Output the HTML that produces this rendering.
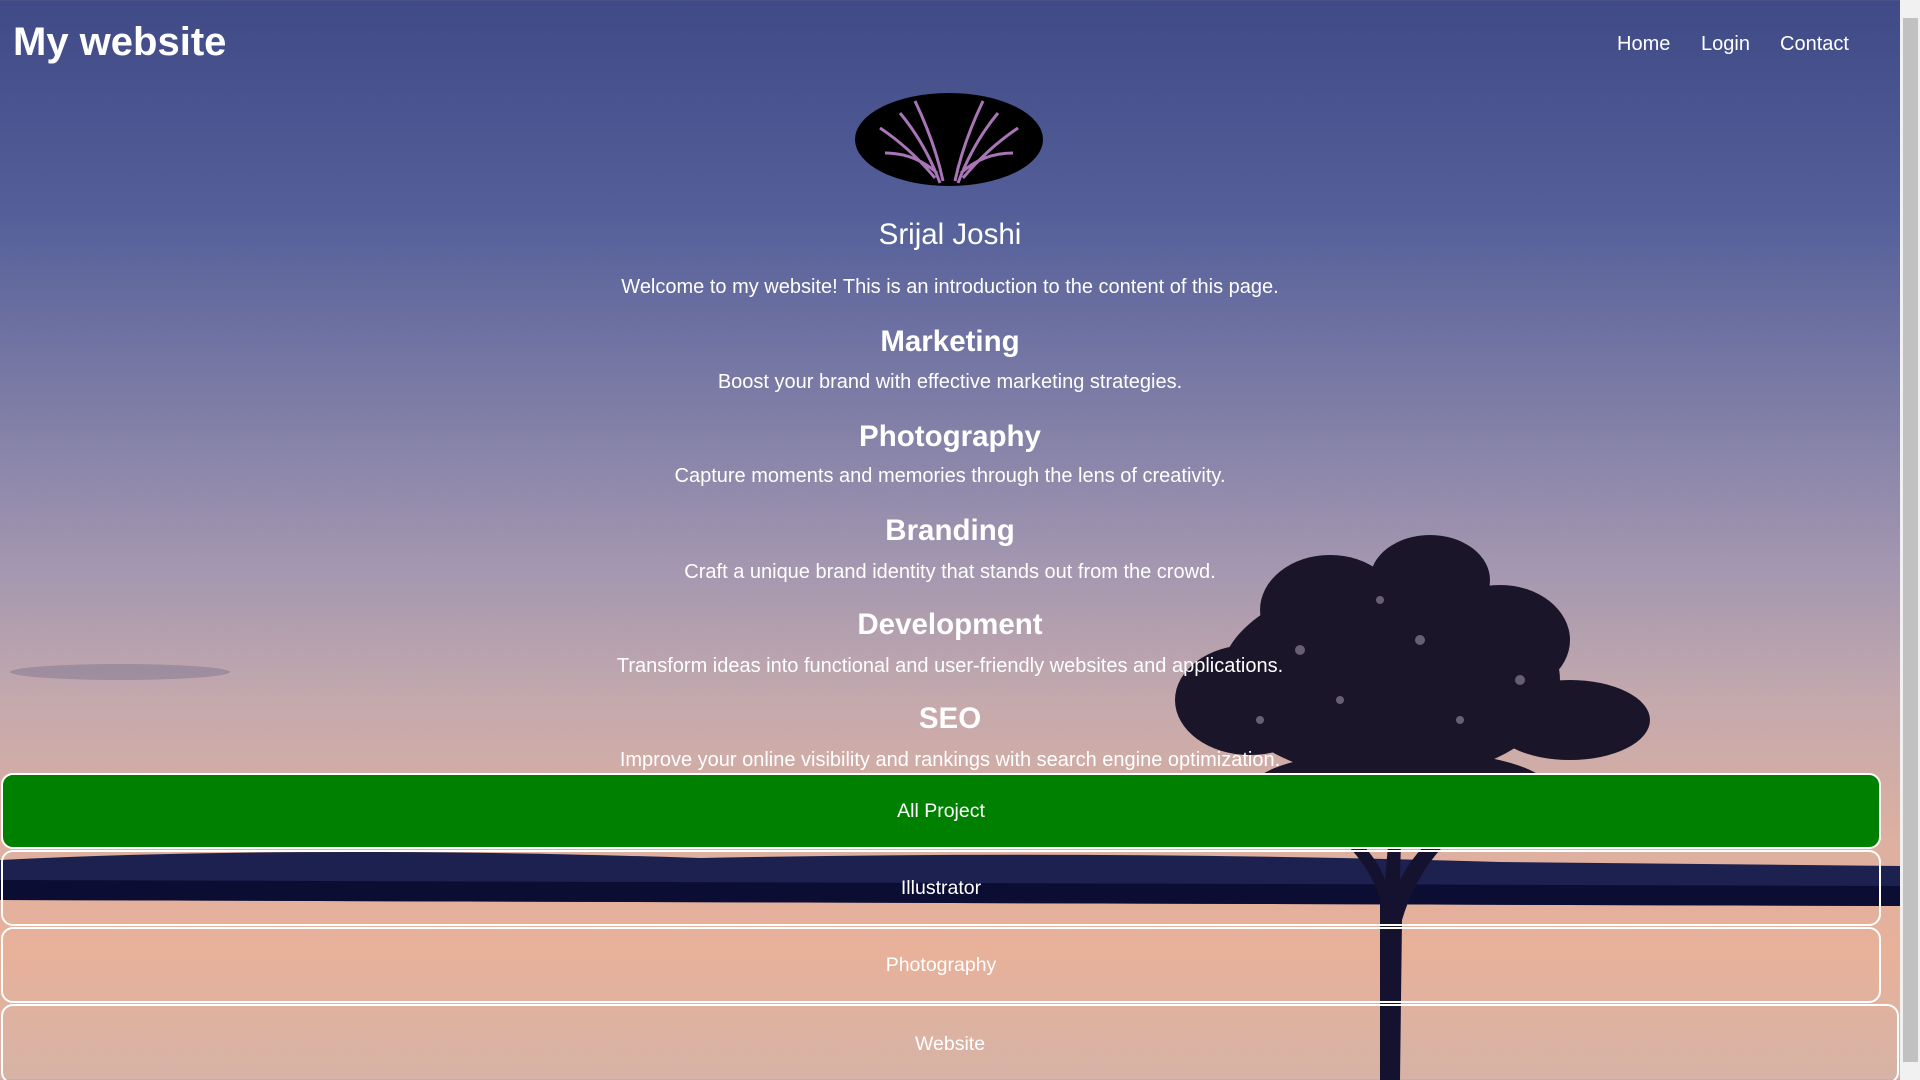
<!DOCTYPE html>
<html><head><meta charset="utf-8"><style>
*{margin:0;padding:0;box-sizing:border-box}
html,body{width:1920px;height:1080px;overflow:hidden}
body{font-family:"Liberation Sans",Arial,sans-serif;color:#fff;position:relative;
background:linear-gradient(180deg,#3f4a86 0px,#55609a 220px,#7d7ca6 400px,#a296b0 560px,#c4a9ad 700px,#ddb0a0 840px,#e8b19a 950px,#d6b3a6 1080px);}
.bg{position:absolute;left:0;top:0;width:1900px;height:1080px}
.t{position:absolute;left:0;width:1900px;text-align:center;white-space:nowrap}
.sb{position:absolute;right:0;top:0;width:20px;height:1080px;background:#f1f1f1}
.sb div{position:absolute;left:3px;right:2px;top:18px;bottom:18px;background:#c1c1c1}
.btn{position:absolute;left:1px;border:2px solid #fff;border-radius:12px;font-size:19.5px;display:flex;align-items:center;justify-content:center}
</style></head><body>
<svg class="bg" viewBox="0 0 1900 1080">
<ellipse cx="120" cy="672" rx="110" ry="8" fill="#7f7590" opacity=".5"/>
<path d="M0 860 Q300 845 700 858 Q1100 850 1500 862 L1900 866 L1900 906 L0 900 Z" fill="#1d2150"/>
<path d="M0 880 L1900 886 L1900 906 L0 900 Z" fill="#0b0d33"/>
<path d="M1380 1080 L1380 900 Q1370 860 1320 820 L1330 815 Q1375 850 1385 880 L1392 800 L1402 800 L1400 880 Q1420 840 1460 820 L1466 826 Q1420 860 1402 920 L1400 1080 Z" fill="#151230"/>
<g fill="#1a1528">
<ellipse cx="1390" cy="680" rx="170" ry="100"/>
<ellipse cx="1330" cy="610" rx="70" ry="55"/>
<ellipse cx="1430" cy="580" rx="60" ry="45"/>
<ellipse cx="1500" cy="640" rx="70" ry="55"/>
<ellipse cx="1250" cy="700" rx="75" ry="55"/>
<ellipse cx="1570" cy="720" rx="80" ry="40"/>
<ellipse cx="1400" cy="790" rx="150" ry="40"/>
</g>
<g fill="#a99cb0" opacity=".55">
<circle cx="1300" cy="650" r="5"/><circle cx="1340" cy="700" r="4"/><circle cx="1420" cy="640" r="5"/><circle cx="1460" cy="720" r="4"/><circle cx="1380" cy="600" r="4"/><circle cx="1260" cy="720" r="4"/><circle cx="1520" cy="680" r="5"/>
</g>
</svg>
<div style="position:absolute;left:13px;top:20px;font-size:40px;font-weight:bold">My website</div>
<div style="position:absolute;top:33px;left:1617px;font-size:20px">Home</div>
<div style="position:absolute;top:33px;left:1701px;font-size:20px">Login</div>
<div style="position:absolute;top:33px;left:1780px;font-size:20px">Contact</div>
<svg style="position:absolute;left:855px;top:93px" width="188" height="93" viewBox="0 0 188 93">
<ellipse cx="94" cy="46.5" rx="94" ry="46.5" fill="#000"/>
<g stroke="#c68ad6" stroke-width="3" opacity=".85">
<path d="M85 90 Q70 50 45 20 M80 85 Q55 55 25 35 M82 80 Q60 60 30 60 M88 88 Q80 50 60 8"/>
<path d="M103 90 Q118 50 143 20 M108 85 Q133 55 163 35 M106 80 Q128 60 158 60 M100 88 Q108 50 128 8"/>
</g></svg>
<div class="t" style="top:218px;font-size:29.5px">Srijal Joshi</div>
<div class="t" style="top:276px;font-size:20px">Welcome to my website! This is an introduction to the content of this page.</div>
<div class="t" style="top:325px;font-size:29.5px;font-weight:bold">Marketing</div>
<div class="t" style="top:371px;font-size:20px">Boost your brand with effective marketing strategies.</div>
<div class="t" style="top:420px;font-size:29.5px;font-weight:bold">Photography</div>
<div class="t" style="top:465px;font-size:20px">Capture moments and memories through the lens of creativity.</div>
<div class="t" style="top:514px;font-size:29.5px;font-weight:bold">Branding</div>
<div class="t" style="top:561px;font-size:20px">Craft a unique brand identity that stands out from the crowd.</div>
<div class="t" style="top:608px;font-size:29.5px;font-weight:bold">Development</div>
<div class="t" style="top:655px;font-size:20px">Transform ideas into functional and user-friendly websites and applications.</div>
<div class="t" style="top:702px;font-size:29.5px;font-weight:bold">SEO</div>
<div class="t" style="top:749px;font-size:20px">Improve your online visibility and rankings with search engine optimization.</div>
<div class="btn" style="top:773px;width:1880px;height:76px;background:#008000">All Project</div>
<div class="btn" style="top:850px;width:1880px;height:76px">Illustrator</div>
<div class="btn" style="top:927px;width:1880px;height:76px">Photography</div>
<div class="btn" style="top:1004px;width:1898px;height:80px">Website</div>
<div class="sb"><div></div></div>
</body></html>
